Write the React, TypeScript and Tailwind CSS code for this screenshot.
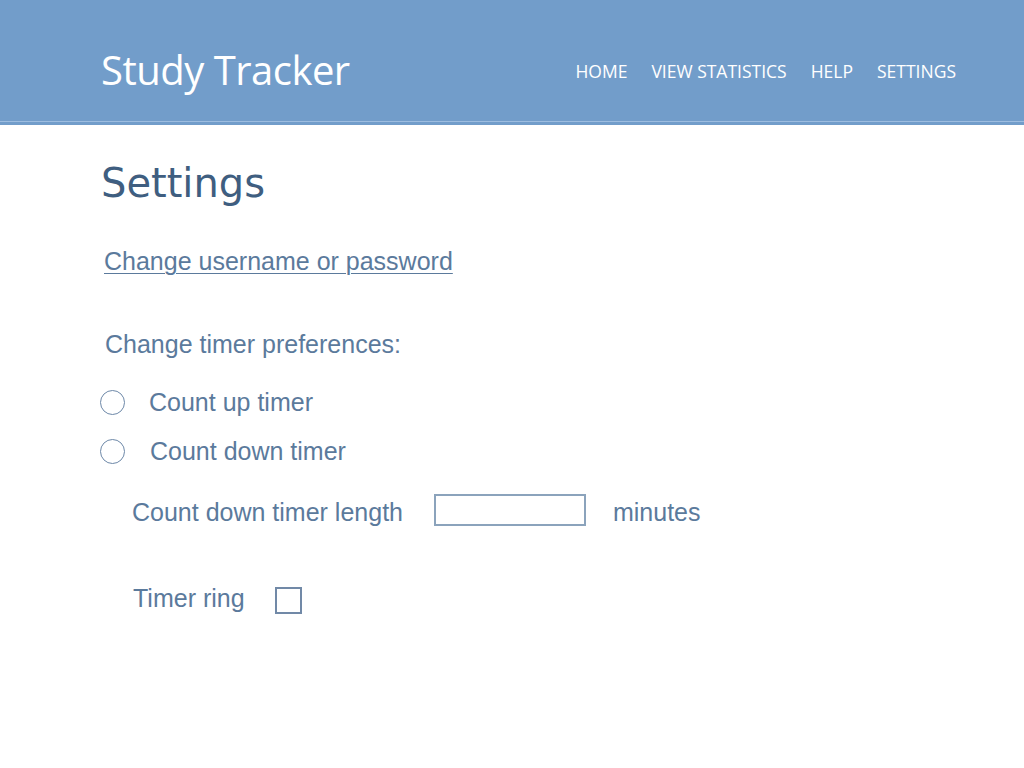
import React from 'react';

const NAV = ['HOME', 'VIEW STATISTICS', 'HELP', 'SETTINGS'];

const App: React.FC = () => {
  return (
    <div className="min-h-screen bg-white font-['Liberation_Sans',Arial,sans-serif] text-[#5b7a9c]">
      {/* Header */}
      <header className="bg-[#729dca]">
        <div className="h-[121px] flex items-start justify-between pl-[101px] pr-[68px]">
          <h1 className="mt-[50px] text-[40px] leading-none tracking-[-0.5px] text-white font-['Open_Sans',sans-serif]">
            Study Tracker
          </h1>
          <nav className="mt-[63px] flex gap-6 text-[17.5px] leading-none text-white font-['Open_Sans',sans-serif]">
            {NAV.map((item) => (
              <a key={item} href="#" className="hover:underline">
                {item}
              </a>
            ))}
          </nav>
        </div>
        <div className="h-px bg-[#9dbde0]" />
        <div className="h-[3px] bg-[#729dca]" />
      </header>

      {/* Content */}
      <main className="pl-[101px]">
        <h2 className="mt-[38px] text-[40px] leading-none text-[#3f5e80] font-['DejaVu_Sans',Verdana,sans-serif]">
          Settings
        </h2>

        <a href="#" className="block mt-[46px] ml-[3px] w-fit text-[25px] leading-none underline underline-offset-[3px] decoration-1">
          Change username or password
        </a>

        <p className="mt-[58px] ml-[4px] text-[25px] leading-none">Change timer preferences:</p>

        <label className="mt-[33px] -ml-px flex items-center gap-6 text-[25px] leading-none">
          <span className="w-[25px] h-[25px] rounded-full border-[1.5px] border-[#6d88a8]" />
          Count up timer
        </label>
        <label className="mt-[24px] -ml-px flex items-center gap-[25px] text-[25px] leading-none">
          <span className="w-[25px] h-[25px] rounded-full border-[1.5px] border-[#6d88a8]" />
          Count down timer
        </label>

        <div className="mt-[30px] ml-[31px] flex items-start text-[25px] leading-none">
          <span className="mt-[6px]">Count down timer length</span>
          <span className="ml-[31px] w-[152px] h-[32px] border-2 border-[#8ba3bc]" />
          <span className="ml-[27px] mt-[6px]">minutes</span>
        </div>

        <div className="mt-[60px] ml-[32px] flex items-start text-[25px] leading-none">
          <span>Timer ring</span>
          <span className="ml-[30px] mt-px w-[27px] h-[27px] border-2 border-[#7189a7]" />
        </div>
      </main>
    </div>
  );
};

export default App;
